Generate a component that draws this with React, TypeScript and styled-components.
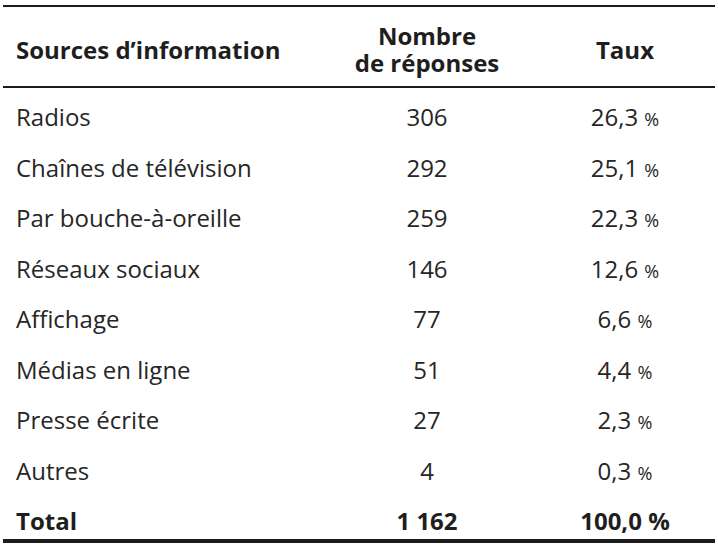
import styled, { createGlobalStyle } from 'styled-components';

const GlobalStyle = createGlobalStyle`
  html, body {
    margin: 0;
    padding: 0;
    background: #ffffff;
  }
  body {
    font-family: 'Open Sans', 'Noto Sans', sans-serif;
    color: #222222;
  }
`;

const Page = styled.div`
  padding: 5px 3px 0 3px;
  width: 712px;
`;

const Table = styled.table`
  width: 712px;
  border-collapse: collapse;
  table-layout: fixed;
  font-size: 24px;
  border-top: 2px solid #1c1c1c;
  border-bottom: 4px solid #1c1c1c;
`;

const HeadCell = styled.th<{ $align?: 'left' | 'center' }>`
  text-align: ${({ $align }) => $align ?? 'center'};
  font-weight: 700;
  line-height: 27px;
  padding: 15px 13px 10px 13px;
  vertical-align: middle;
  color: #1e1e1e;
  border-bottom: 2px solid #1c1c1c;
`;

const Row = styled.tr<{ $first?: boolean; $total?: boolean }>`
  td {
    padding-top: ${({ $first }) => ($first ? '14px' : '10.5px')};
    padding-bottom: ${({ $total }) => ($total ? '3px' : '10px')};
    font-weight: ${({ $total }) => ($total ? 700 : 400)};
    color: ${({ $total }) => ($total ? '#1e1e1e' : '#262626')};
  }
`;

const Cell = styled.td<{ $align?: 'left' | 'center' }>`
  text-align: ${({ $align }) => $align ?? 'center'};
  line-height: 30px;
  height: 30px;
  padding-left: 13px;
  padding-right: 13px;
  white-space: nowrap;
`;

const Pct = styled.span<{ $small?: boolean }>`
  font-size: ${({ $small }) => ($small ? '0.75em' : '1em')};
  line-height: 0;
`;

type Source = { label: string; count: string; rate: string };

const rows: Source[] = [
  { label: 'Radios', count: '306', rate: '26,3' },
  { label: 'Chaînes de télévision', count: '292', rate: '25,1' },
  { label: 'Par bouche-à-oreille', count: '259', rate: '22,3' },
  { label: 'Réseaux sociaux', count: '146', rate: '12,6' },
  { label: 'Affichage', count: '77', rate: '6,6' },
  { label: 'Médias en ligne', count: '51', rate: '4,4' },
  { label: 'Presse écrite', count: '27', rate: '2,3' },
  { label: 'Autres', count: '4', rate: '0,3' },
];

const App = () => {
  return (
    <Page>
      <GlobalStyle />
      <Table>
        <colgroup>
          <col style={{ width: '316px' }} />
          <col style={{ width: '216px' }} />
          <col style={{ width: '180px' }} />
        </colgroup>
        <thead>
          <tr>
            <HeadCell $align="left">Sources d’information</HeadCell>
            <HeadCell>
              Nombre
              <br />
              de réponses
            </HeadCell>
            <HeadCell>Taux</HeadCell>
          </tr>
        </thead>
        <tbody>
          {rows.map((r, i) => (
            <Row key={r.label} $first={i === 0}>
              <Cell $align="left">{r.label}</Cell>
              <Cell>{r.count}</Cell>
              <Cell>
                {r.rate} <Pct $small>%</Pct>
              </Cell>
            </Row>
          ))}
          <Row $total>
            <Cell $align="left">Total</Cell>
            <Cell>1 162</Cell>
            <Cell>
              100,0 <Pct>%</Pct>
            </Cell>
          </Row>
        </tbody>
      </Table>
    </Page>
  );
};

export default App;
